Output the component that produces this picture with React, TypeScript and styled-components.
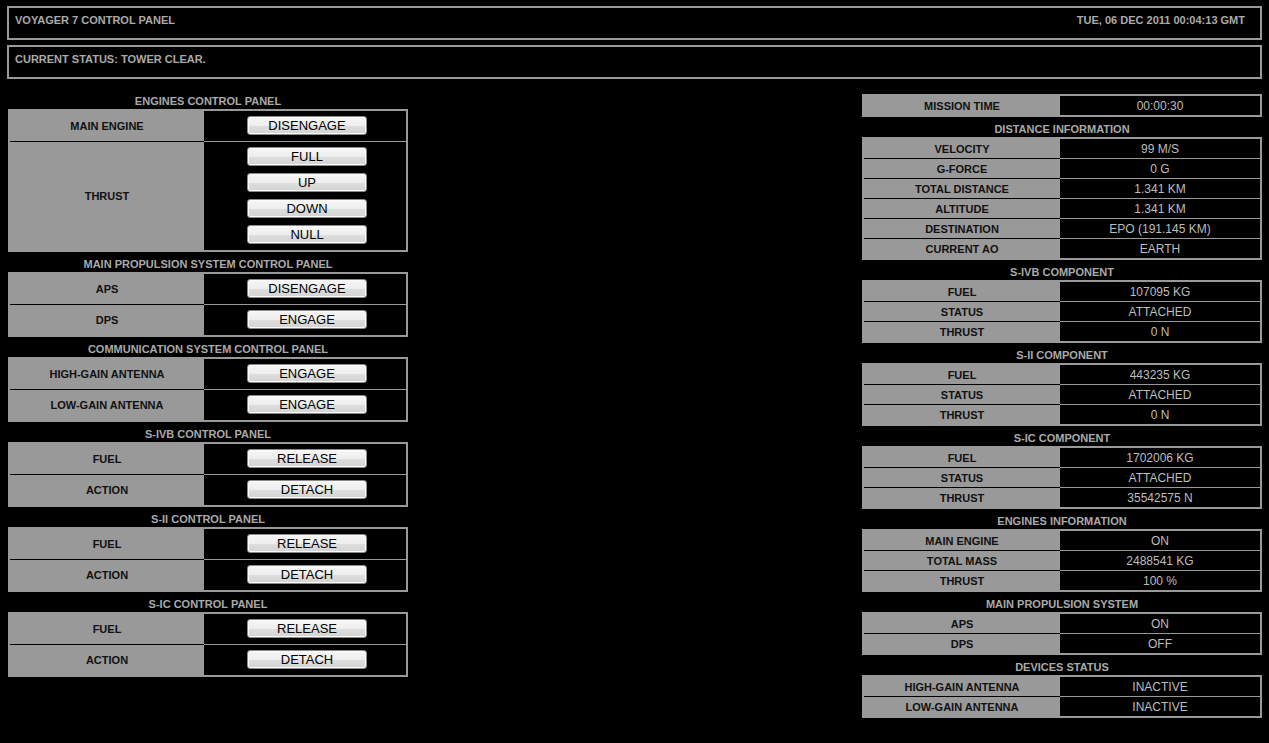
import styled, { createGlobalStyle } from "styled-components";

const GlobalStyle = createGlobalStyle`
  html, body {
    margin: 0;
    background-color: #000;
  }
  body {
    font-family: "Liberation Sans", Arial, sans-serif;
  }
`;

const Page = styled.div`
  padding: 6px 7px 0 7px;
`;

const HeaderBox = styled.div`
  box-sizing: border-box;
  height: 34px;
  border: 2px solid #999;
  padding: 5px 15px 0 6px;
  display: flex;
  justify-content: space-between;
  font-size: 11px;
  font-weight: bold;
  line-height: 15px;
  color: #aaa;

  & + & {
    margin-top: 5px;
  }
`;

const Main = styled.div`
  display: flex;
  justify-content: space-between;
  align-items: flex-start;
  margin-top: 10px;
  padding-left: 1px;
`;

const Column = styled.div<{ $offset?: number }>`
  width: 400px;
  padding-top: ${(props) => props.$offset ?? 0}px;
`;

const SectionTitle = styled.div`
  margin-top: 4px;
  line-height: 16px;
  font-size: 11px;
  font-weight: bold;
  color: #aaa;
  text-align: center;
`;

const Table = styled.div<{ $labelWidth: number }>`
  display: grid;
  grid-template-columns: ${(props) => props.$labelWidth}px 1fr;
  border: 2px solid #999;
  background-color: #999;
`;

const LabelCell = styled.div<{ $divider?: boolean; $height: number }>`
  display: flex;
  align-items: center;
  justify-content: center;
  min-height: ${(props) => props.$height}px;
  background-color: #999;
  border-top: ${(props) => (props.$divider ? "1px solid #000" : "none")};
  font-size: 11px;
  font-weight: bold;
  color: #111;
`;

const ValueCell = styled.div<{ $divider?: boolean; $height: number }>`
  display: flex;
  align-items: center;
  justify-content: center;
  min-height: ${(props) => props.$height}px;
  background-color: #000;
  border-top: ${(props) => (props.$divider ? "1px solid #999" : "none")};
  font-size: 12px;
  color: #bdbdbd;
`;

const ButtonCell = styled.div<{ $divider?: boolean }>`
  display: flex;
  flex-direction: column;
  align-items: center;
  gap: 7px;
  padding: 5px 0 6px 4px;
  background-color: #000;
  border-top: ${(props) => (props.$divider ? "1px solid #999" : "none")};
`;

const PanelButton = styled.button`
  box-sizing: border-box;
  width: 120px;
  height: 19px;
  padding: 0;
  border: 1px solid #8a8a8a;
  border-radius: 3px;
  background: linear-gradient(
    to bottom,
    #f6f6f6 0%,
    #eeeeee 50%,
    #dedede 51%,
    #d3d3d3 100%
  );
  box-shadow: inset 0 0 0 1px #fbfbfb;
  font-family: "Liberation Sans", Arial, sans-serif;
  font-size: 13px;
  line-height: 17px;
  color: #000;
  cursor: pointer;
`;

type ControlRow = { label: string; buttons: string[] };
type ControlPanel = { title: string; rows: ControlRow[] };
type InfoRow = [string, string];
type InfoPanel = { title?: string; rows: InfoRow[] };

const controlPanels: ControlPanel[] = [
  {
    title: "ENGINES CONTROL PANEL",
    rows: [
      { label: "MAIN ENGINE", buttons: ["DISENGAGE"] },
      { label: "THRUST", buttons: ["FULL", "UP", "DOWN", "NULL"] },
    ],
  },
  {
    title: "MAIN PROPULSION SYSTEM CONTROL PANEL",
    rows: [
      { label: "APS", buttons: ["DISENGAGE"] },
      { label: "DPS", buttons: ["ENGAGE"] },
    ],
  },
  {
    title: "COMMUNICATION SYSTEM CONTROL PANEL",
    rows: [
      { label: "HIGH-GAIN ANTENNA", buttons: ["ENGAGE"] },
      { label: "LOW-GAIN ANTENNA", buttons: ["ENGAGE"] },
    ],
  },
  {
    title: "S-IVB CONTROL PANEL",
    rows: [
      { label: "FUEL", buttons: ["RELEASE"] },
      { label: "ACTION", buttons: ["DETACH"] },
    ],
  },
  {
    title: "S-II CONTROL PANEL",
    rows: [
      { label: "FUEL", buttons: ["RELEASE"] },
      { label: "ACTION", buttons: ["DETACH"] },
    ],
  },
  {
    title: "S-IC CONTROL PANEL",
    rows: [
      { label: "FUEL", buttons: ["RELEASE"] },
      { label: "ACTION", buttons: ["DETACH"] },
    ],
  },
];

const infoPanels: InfoPanel[] = [
  { rows: [["MISSION TIME", "00:00:30"]] },
  {
    title: "DISTANCE INFORMATION",
    rows: [
      ["VELOCITY", "99 M/S"],
      ["G-FORCE", "0 G"],
      ["TOTAL DISTANCE", "1.341 KM"],
      ["ALTITUDE", "1.341 KM"],
      ["DESTINATION", "EPO (191.145 KM)"],
      ["CURRENT AO", "EARTH"],
    ],
  },
  {
    title: "S-IVB COMPONENT",
    rows: [
      ["FUEL", "107095 KG"],
      ["STATUS", "ATTACHED"],
      ["THRUST", "0 N"],
    ],
  },
  {
    title: "S-II COMPONENT",
    rows: [
      ["FUEL", "443235 KG"],
      ["STATUS", "ATTACHED"],
      ["THRUST", "0 N"],
    ],
  },
  {
    title: "S-IC COMPONENT",
    rows: [
      ["FUEL", "1702006 KG"],
      ["STATUS", "ATTACHED"],
      ["THRUST", "35542575 N"],
    ],
  },
  {
    title: "ENGINES INFORMATION",
    rows: [
      ["MAIN ENGINE", "ON"],
      ["TOTAL MASS", "2488541 KG"],
      ["THRUST", "100 %"],
    ],
  },
  {
    title: "MAIN PROPULSION SYSTEM",
    rows: [
      ["APS", "ON"],
      ["DPS", "OFF"],
    ],
  },
  {
    title: "DEVICES STATUS",
    rows: [
      ["HIGH-GAIN ANTENNA", "INACTIVE"],
      ["LOW-GAIN ANTENNA", "INACTIVE"],
    ],
  },
];

const ControlSection = ({ panel }: { panel: ControlPanel }) => (
  <section>
    <SectionTitle>{panel.title}</SectionTitle>
    <Table $labelWidth={194}>
      {panel.rows.map((row, i) => [
        <LabelCell key={`l${i}`} $divider={i > 0} $height={30}>
          {row.label}
        </LabelCell>,
        <ButtonCell key={`b${i}`} $divider={i > 0}>
          {row.buttons.map((b) => (
            <PanelButton key={b} type="button">
              {b}
            </PanelButton>
          ))}
        </ButtonCell>,
      ])}
    </Table>
  </section>
);

const InfoSection = ({ panel }: { panel: InfoPanel }) => (
  <section>
    {panel.title && <SectionTitle>{panel.title}</SectionTitle>}
    <Table $labelWidth={196}>
      {panel.rows.map(([label, value], i) => [
        <LabelCell key={`l${i}`} $divider={i > 0} $height={19}>
          {label}
        </LabelCell>,
        <ValueCell key={`v${i}`} $divider={i > 0} $height={19}>
          {value}
        </ValueCell>,
      ])}
    </Table>
  </section>
);

const App = () => (
  <>
    <GlobalStyle />
    <Page>
      <HeaderBox>
        <span>VOYAGER 7 CONTROL PANEL</span>
        <span>TUE, 06 DEC 2011 00:04:13 GMT</span>
      </HeaderBox>
      <HeaderBox>
        <span>CURRENT STATUS: TOWER CLEAR.</span>
      </HeaderBox>
      <Main>
        <Column>
          {controlPanels.map((p) => (
            <ControlSection key={p.title} panel={p} />
          ))}
        </Column>
        <Column $offset={5}>
          {infoPanels.map((p, i) => (
            <InfoSection key={i} panel={p} />
          ))}
        </Column>
      </Main>
    </Page>
  </>
);

export default App;
